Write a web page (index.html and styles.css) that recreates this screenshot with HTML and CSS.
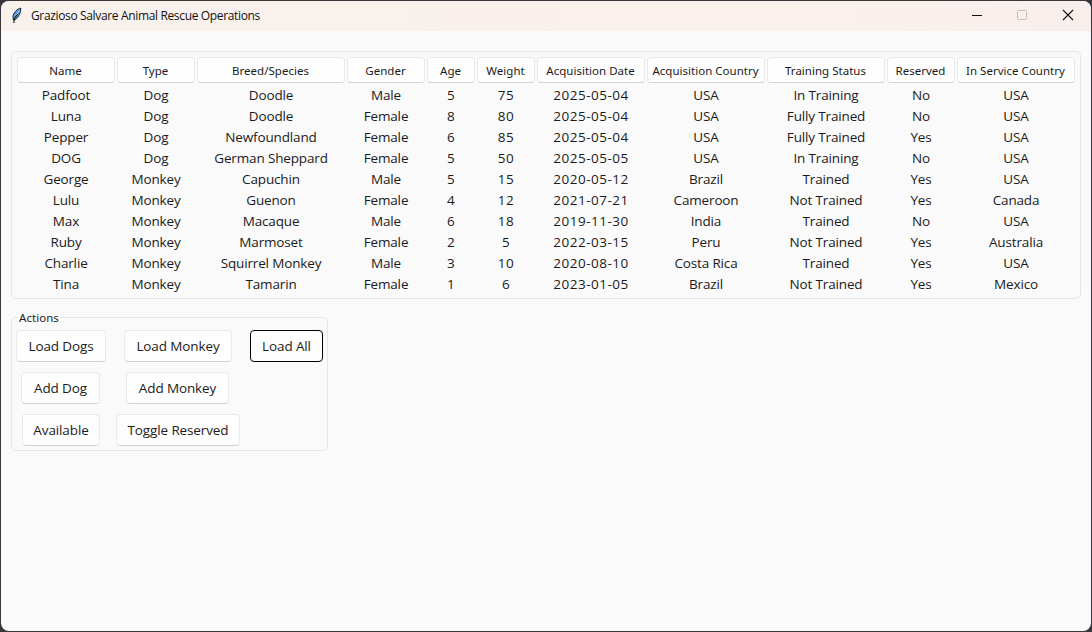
FILE: index.html
```html
<!DOCTYPE html>
<html lang="en">
<head>
<meta charset="utf-8">
<title>Grazioso Salvare Animal Rescue Operations</title>
<link rel="stylesheet" href="styles.css">
</head>
<body>
<div class="window">
  <header class="titlebar">
    <svg class="feather" width="12" height="17" viewBox="0 0 12 17">
      <path d="M9.8 1C6 2 2.4 5.5 2 9.5L2.3 13 4.5 12.5C7.8 10 10 5.5 9.8 1Z" fill="#4f94dc" stroke="#15202c" stroke-width="0.9"/>
      <path d="M8.5 3L4.5 9" stroke="#a9d1fa" stroke-width="1" fill="none"/>
      <path d="M6.6 7L3.2 12 2.9 16" stroke="#080808" stroke-width="1" fill="none"/>
    </svg>
    <h1 class="title">Grazioso Salvare Animal Rescue Operations</h1>
    <svg class="controls" width="104" height="14" viewBox="0 0 104 14">
      <path d="M1 7.5H11" stroke="#111" fill="none"/>
      <rect x="46.5" y="2.5" width="9" height="9" rx="1" stroke="#c6bfbd" fill="none"/>
      <path d="M92 2L102 12M102 2L92 12" stroke="#111" stroke-width="1.1" fill="none"/>
    </svg>
  </header>
  <main class="content">
    <section class="panel">
      <table class="animals">
        <colgroup><col class="w100"><col class="w80"><col class="w150"><col class="w80"><col class="w50"><col class="w60"><col class="w110"><col class="w120"><col class="w120"><col class="w70"><col class="w120"></colgroup>
        <thead><tr><th><span>Name</span></th><th><span>Type</span></th><th><span>Breed/Species</span></th><th><span>Gender</span></th><th><span>Age</span></th><th><span>Weight</span></th><th><span>Acquisition Date</span></th><th><span>Acquisition Country</span></th><th><span>Training Status</span></th><th><span>Reserved</span></th><th><span>In Service Country</span></th></tr></thead>
        <tbody>
          <tr><td>Padfoot</td><td>Dog</td><td>Doodle</td><td>Male</td><td class="num">5</td><td class="num">75</td><td class="num">2025-05-04</td><td>USA</td><td>In Training</td><td>No</td><td>USA</td></tr>
          <tr><td>Luna</td><td>Dog</td><td>Doodle</td><td>Female</td><td class="num">8</td><td class="num">80</td><td class="num">2025-05-04</td><td>USA</td><td>Fully Trained</td><td>No</td><td>USA</td></tr>
          <tr><td>Pepper</td><td>Dog</td><td>Newfoundland</td><td>Female</td><td class="num">6</td><td class="num">85</td><td class="num">2025-05-04</td><td>USA</td><td>Fully Trained</td><td>Yes</td><td>USA</td></tr>
          <tr><td>DOG</td><td>Dog</td><td>German Sheppard</td><td>Female</td><td class="num">5</td><td class="num">50</td><td class="num">2025-05-05</td><td>USA</td><td>In Training</td><td>No</td><td>USA</td></tr>
          <tr><td>George</td><td>Monkey</td><td>Capuchin</td><td>Male</td><td class="num">5</td><td class="num">15</td><td class="num">2020-05-12</td><td>Brazil</td><td>Trained</td><td>Yes</td><td>USA</td></tr>
          <tr><td>Lulu</td><td>Monkey</td><td>Guenon</td><td>Female</td><td class="num">4</td><td class="num">12</td><td class="num">2021-07-21</td><td>Cameroon</td><td>Not Trained</td><td>Yes</td><td>Canada</td></tr>
          <tr><td>Max</td><td>Monkey</td><td>Macaque</td><td>Male</td><td class="num">6</td><td class="num">18</td><td class="num">2019-11-30</td><td>India</td><td>Trained</td><td>No</td><td>USA</td></tr>
          <tr><td>Ruby</td><td>Monkey</td><td>Marmoset</td><td>Female</td><td class="num">2</td><td class="num">5</td><td class="num">2022-03-15</td><td>Peru</td><td>Not Trained</td><td>Yes</td><td>Australia</td></tr>
          <tr><td>Charlie</td><td>Monkey</td><td>Squirrel Monkey</td><td>Male</td><td class="num">3</td><td class="num">10</td><td class="num">2020-08-10</td><td>Costa Rica</td><td>Trained</td><td>Yes</td><td>USA</td></tr>
          <tr><td>Tina</td><td>Monkey</td><td>Tamarin</td><td>Female</td><td class="num">1</td><td class="num">6</td><td class="num">2023-01-05</td><td>Brazil</td><td>Not Trained</td><td>Yes</td><td>Mexico</td></tr>
        </tbody>
      </table>
    </section>
    <section class="actions">
      <h2 class="legend">Actions</h2>
      <div class="buttons">
        <button class="btn load-dogs">Load Dogs</button>
        <button class="btn load-monkey">Load Monkey</button>
        <button class="btn load-all focused">Load All</button>
        <button class="btn add-dog">Add Dog</button>
        <button class="btn add-monkey">Add Monkey</button>
        <span></span>
        <button class="btn available">Available</button>
        <button class="btn toggle">Toggle Reserved</button>
      </div>
    </section>
  </main>
</div>
</body>
</html>
```
FILE: styles.css
```css
* { box-sizing: border-box; }
body { margin: 0; height: 632px; overflow: hidden; background: #37373b; padding: 1px; font-family: "Open Sans", "Noto Sans", sans-serif; color: #1b1b1b; }
.window { height: 630px; border-radius: 8px; overflow: hidden; background: #fafafa; }
.titlebar { display: flex; align-items: center; height: 30px; padding: 0 16px 0 10px; background: linear-gradient(90deg, #f8f1ec, #faf0ec 70%, #f8efec); }
.feather { flex: none; margin-bottom: 2px; }
.title { margin: 0 auto 0 8px; font-size: 12px; font-weight: 400; line-height: 28px; letter-spacing: -0.35px; white-space: nowrap; color: #111; }
.controls { flex: none; margin-bottom: 2px; }
.content { display: flex; flex-direction: column; align-items: flex-start; gap: 18px; padding: 20px 10px; }
.panel { width: 1070px; height: 248px; padding: 4px; border: 1px solid #e7e7e7; border-radius: 5px; }
.animals { width: 1060px; table-layout: fixed; border-collapse: collapse; text-align: center; white-space: nowrap; }
.w50 { width: 50px; }
.w60 { width: 60px; }
.w70 { width: 70px; }
.w80 { width: 80px; }
.w100 { width: 100px; }
.w110 { width: 110px; }
.w120 { width: 120px; }
.w150 { width: 150px; }
.animals th { height: 29px; padding: 1px 1px 2px; font-family: "Noto Sans", "Open Sans", sans-serif; font-size: 11.5px; font-weight: 400; letter-spacing: 0.02px; }
.animals th span { display: block; height: 26px; padding-right: 1px; line-height: 26px; border: 1px solid #e9e9e9; border-bottom-color: #d3d3d3; border-radius: 4px; background: #fefefe; }
.animals td { height: 21px; padding: 0; font-size: 13.5px; line-height: 21px; letter-spacing: -0.15px; }
.animals .num { letter-spacing: 0.5px; }
.actions { width: 317px; height: 134px; border: 1px solid #e7e7e7; border-radius: 5px; padding: 0 4px; }
.legend { width: max-content; height: 12px; margin: -6px 0 6px 2px; padding: 0 1px; background: #fafafa; font-family: "Noto Sans", "Open Sans", sans-serif; font-size: 11.5px; font-weight: 400; line-height: 12px; letter-spacing: 0.05px; }
.buttons { display: grid; grid-template-columns: 90px 124px 73px; grid-auto-rows: 32px; gap: 10px; justify-items: center; }
.btn { height: 32px; padding: 0; border: 1px solid #e9e9e9; border-bottom-color: #d3d3d3; border-radius: 4px; background: #fefefe; color: inherit; font: 13.5px/30px "Open Sans", "Noto Sans", sans-serif; letter-spacing: -0.12px; white-space: nowrap; }
.focused { border-color: #000; }
.load-dogs { width: 90px; }
.load-monkey { width: 108px; }
.load-all { width: 73px; }
.add-dog { width: 79px; margin-right: 1px; }
.add-monkey { width: 103px; margin-right: 1px; }
.available { width: 78px; }
.toggle { width: 124px; }
```
